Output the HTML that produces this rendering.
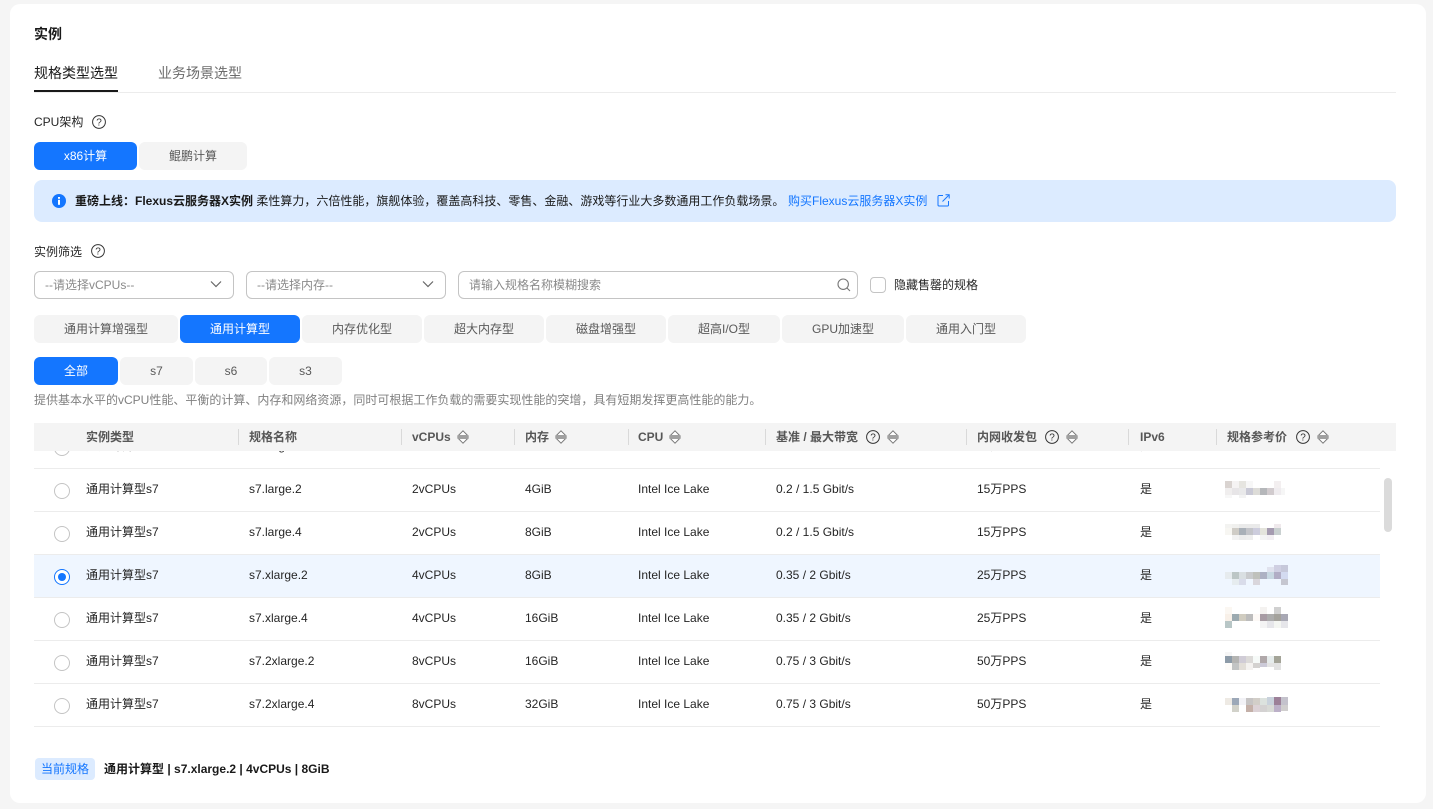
<!DOCTYPE html>
<html lang="zh-CN">
<head>
<meta charset="utf-8">
<title>实例</title>
<style>
*{box-sizing:border-box}
html,body{margin:0;padding:0}
body{width:1433px;height:809px;overflow:hidden;background:#f5f5f5;position:relative;font:12px/16px "Liberation Sans","Noto Sans CJK SC",sans-serif;color:#191919}
.card{position:absolute;left:10px;top:4px;width:1416px;height:799px;background:#fff;border-radius:10px}
.a{position:absolute;white-space:nowrap}
.btn{position:absolute;height:28px;line-height:28px;text-align:center;background:#f4f4f4;color:#595959;border-radius:6px}
.on{background:#1476ff;color:#fff}
.inp{position:absolute;top:271px;height:28px;line-height:26px;border:1px solid #c4c4c4;border-radius:6px;padding-left:10px;color:#8a8a8a;background:#fff}
.th{position:absolute;top:429px;line-height:16px;font-weight:bold;color:#575757}
.sep{position:absolute;top:429px;width:1px;height:16px;background:#d9d9d9}
.sv{position:absolute;top:430px}
.scroll{position:absolute;left:34px;top:451px;width:1346px;height:276px;overflow:hidden}
.row{position:absolute;left:0;width:1346px;height:43px;border-bottom:1px solid #ececec}
.row span{position:absolute;top:12px;line-height:16px;white-space:nowrap;color:#252525}
.row i{position:absolute;left:20px;top:14px;width:16px;height:16px;border:1px solid #c4c4c4;border-radius:50%;background:#fff}
.c1{left:52px}.c2{left:215px}.c3{left:378px}.c4{left:491px}.c5{left:604px}.c6{left:742px}.c7{left:943px}.c8{left:1106px}
</style>
</head>
<body>
<div class="card"></div>

<div class="a" style="left:34px;top:26px;font-size:14px;font-weight:bold">实例</div>
<div class="a" style="left:34px;top:64px;font-size:14px;line-height:18px;">规格类型选型</div>
<div class="a" style="left:158px;top:64px;font-size:14px;line-height:18px;color:#6b6b6b">业务场景选型</div>
<div class="a" style="left:34px;top:92px;width:1362px;height:1px;background:#ececec"></div>
<div class="a" style="left:34px;top:90px;width:84px;height:2px;background:#191919"></div>

<div class="a" style="left:34px;top:114px;color:#252525">CPU架构</div>
<svg class="a" style="left:92px;top:115px" width="14" height="14" viewBox="0 0 14 14"><circle cx="7" cy="7" r="6.4" fill="none" stroke="#333" stroke-width="1"/><text x="7" y="10.5" font-size="10" text-anchor="middle" fill="#333" font-family="Liberation Sans">?</text></svg>
<div class="btn on" style="left:34px;top:142px;width:103px">x86计算</div>
<div class="btn" style="left:139px;top:142px;width:108px">鲲鹏计算</div>

<div class="a" style="left:34px;top:180px;width:1362px;height:42px;background:#dcebff;border-radius:8px"></div>
<svg class="a" style="left:52px;top:194px" width="14" height="14" viewBox="0 0 14 14"><circle cx="7" cy="7" r="7" fill="#1476ff"/><rect x="6" y="3" width="2" height="1.8" fill="#fff"/><rect x="6" y="5.8" width="2" height="5" fill="#fff"/></svg>
<div class="a" style="left:75px;top:193px;color:#191919"><b>重磅上线：Flexus云服务器X实例</b> 柔性算力，六倍性能，旗舰体验，覆盖高科技、零售、金融、游戏等行业大多数通用工作负载场景。</div>
<div class="a" style="left:788px;top:193px;color:#1476ff">购买Flexus云服务器X实例</div>
<svg class="a" style="left:937px;top:194px" width="13" height="13" viewBox="0 0 13 13" fill="none" stroke="#1476ff" stroke-width="1"><path d="M6 1.5H2a1 1 0 0 0-1 1V11a1 1 0 0 0 1 1h8.500a1 1 0 0 0 1-1V7"/><path d="M5.500 7.500L12 1"/><path d="M8.500 .8H12.200V4.500"/></svg>

<div class="a" style="left:34px;top:244px;color:#252525">实例筛选</div>
<svg class="a" style="left:91px;top:244px" width="14" height="14" viewBox="0 0 14 14"><circle cx="7" cy="7" r="6.400" fill="none" stroke="#333" stroke-width="1"/><text x="7" y="10.500" font-size="10" text-anchor="middle" fill="#333" font-family="Liberation Sans">?</text></svg>

<div class="inp" style="left:34px;width:200px">--请选择vCPUs--</div>
<svg class="a" style="left:210px;top:280px" width="12" height="9" viewBox="0 0 12 9"><path d="M1 1.500L6 6.500L11 1.500" fill="none" stroke="#666" stroke-width="1.200"/></svg>
<div class="inp" style="left:246px;width:200px">--请选择内存--</div>
<svg class="a" style="left:422px;top:280px" width="12" height="9" viewBox="0 0 12 9"><path d="M1 1.500L6 6.500L11 1.500" fill="none" stroke="#666" stroke-width="1.200"/></svg>
<div class="inp" style="left:458px;width:400px">请输入规格名称模糊搜索</div>
<svg class="a" style="left:837px;top:278px" width="14" height="14" viewBox="0 0 14 14" fill="none" stroke="#777" stroke-width="1.100"><circle cx="6.200" cy="6.200" r="5.200"/><path d="M10 10L13 13"/></svg>
<div class="a" style="left:870px;top:277px;width:16px;height:16px;border:1px solid #c4c4c4;border-radius:4px;background:#fff"></div>
<div class="a" style="left:894px;top:277px;color:#252525">隐藏售罄的规格</div>

<div class="btn" style="left:34px;top:315px;width:144px">通用计算增强型</div>
<div class="btn on" style="left:180px;top:315px;width:120px">通用计算型</div>
<div class="btn" style="left:302px;top:315px;width:120px">内存优化型</div>
<div class="btn" style="left:424px;top:315px;width:120px">超大内存型</div>
<div class="btn" style="left:546px;top:315px;width:120px">磁盘增强型</div>
<div class="btn" style="left:668px;top:315px;width:112px">超高I/O型</div>
<div class="btn" style="left:782px;top:315px;width:122px">GPU加速型</div>
<div class="btn" style="left:906px;top:315px;width:120px">通用入门型</div>

<div class="btn on" style="left:34px;top:357px;width:84px">全部</div>
<div class="btn" style="left:120px;top:357px;width:73px">s7</div>
<div class="btn" style="left:195px;top:357px;width:72px">s6</div>
<div class="btn" style="left:269px;top:357px;width:73px">s3</div>

<div class="a" style="left:34px;top:392px;color:#808080">提供基本水平的vCPU性能、平衡的计算、内存和网络资源，同时可根据工作负载的需要实现性能的突增，具有短期发挥更高性能的能力。</div>

<div class="scroll">
  <div class="row" style="top:-25px"><i></i><span class="c1">通用计算型s7</span><span class="c2">s7.large</span><span class="c3">2vCPUs</span><span class="c4">2GiB</span><span class="c5">Intel Ice Lake</span><span class="c6">0.2 / 1.5 Gbit/s</span><span class="c7">15万PPS</span><span class="c8">是</span></div>
  <div class="row" style="top:18px"><i></i><span class="c1">通用计算型s7</span><span class="c2">s7.large.2</span><span class="c3">2vCPUs</span><span class="c4">4GiB</span><span class="c5">Intel Ice Lake</span><span class="c6">0.2 / 1.5 Gbit/s</span><span class="c7">15万PPS</span><span class="c8">是</span></div>
  <div class="row" style="top:61px"><i></i><span class="c1">通用计算型s7</span><span class="c2">s7.large.4</span><span class="c3">2vCPUs</span><span class="c4">8GiB</span><span class="c5">Intel Ice Lake</span><span class="c6">0.2 / 1.5 Gbit/s</span><span class="c7">15万PPS</span><span class="c8">是</span></div>
  <div class="row" style="top:104px;background:#eff6ff"><i style="border-color:#1476ff"><b style="position:absolute;left:3px;top:3px;width:8px;height:8px;border-radius:50%;background:#1476ff"></b></i><span class="c1">通用计算型s7</span><span class="c2">s7.xlarge.2</span><span class="c3">4vCPUs</span><span class="c4">8GiB</span><span class="c5">Intel Ice Lake</span><span class="c6">0.35 / 2 Gbit/s</span><span class="c7">25万PPS</span><span class="c8">是</span></div>
  <div class="row" style="top:147px"><i></i><span class="c1">通用计算型s7</span><span class="c2">s7.xlarge.4</span><span class="c3">4vCPUs</span><span class="c4">16GiB</span><span class="c5">Intel Ice Lake</span><span class="c6">0.35 / 2 Gbit/s</span><span class="c7">25万PPS</span><span class="c8">是</span></div>
  <div class="row" style="top:190px"><i></i><span class="c1">通用计算型s7</span><span class="c2">s7.2xlarge.2</span><span class="c3">8vCPUs</span><span class="c4">16GiB</span><span class="c5">Intel Ice Lake</span><span class="c6">0.75 / 3 Gbit/s</span><span class="c7">50万PPS</span><span class="c8">是</span></div>
  <div class="row" style="top:233px"><i></i><span class="c1">通用计算型s7</span><span class="c2">s7.2xlarge.4</span><span class="c3">8vCPUs</span><span class="c4">32GiB</span><span class="c5">Intel Ice Lake</span><span class="c6">0.75 / 3 Gbit/s</span><span class="c7">50万PPS</span><span class="c8">是</span></div>
</div>

<!-- blurred prices -->
<svg class="a" style="left:1225px;top:481px" width="63" height="250" viewBox="0 0 63 250" shape-rendering="crispEdges">
  <!-- row 1 -->
  <g transform="translate(0,0)"><rect x="0" y="0" width="7" height="7" fill="#d9d3d0"/><rect x="7" y="0" width="7" height="7" fill="#f5f3f3"/><rect x="14" y="0" width="7" height="7" fill="#e6e5e0"/><rect x="21" y="0" width="7" height="7" fill="#f7f7f7"/><rect x="49" y="0" width="7" height="7" fill="#f3eff0"/>
  <rect x="0" y="7" width="7" height="7" fill="#f0eeee"/><rect x="7" y="7" width="7" height="7" fill="#e7e5e7"/><rect x="14" y="7" width="7" height="7" fill="#e9e9ea"/><rect x="21" y="7" width="7" height="7" fill="#c9c9d5"/><rect x="28" y="7" width="7" height="7" fill="#dddcd8"/><rect x="35" y="7" width="7" height="7" fill="#b5b7ba"/><rect x="42" y="7" width="7" height="7" fill="#d1cbce"/><rect x="49" y="7" width="7" height="7" fill="#efecef"/><rect x="56" y="7" width="4" height="7" fill="#f6f6f6"/>
  <rect x="0" y="14" width="7" height="3" fill="#f7f7f7"/><rect x="14" y="14" width="7" height="3" fill="#f3f3f3"/></g>
  <!-- row 2 -->
  <g transform="translate(0,43)"><rect x="0" y="0" width="7" height="4" fill="#f3f3f1"/><rect x="7" y="0" width="7" height="4" fill="#f0f0ee"/><rect x="14" y="0" width="21" height="4" fill="#eaeaea"/><rect x="49" y="0" width="7" height="4" fill="#efe9ec"/>
  <rect x="0" y="4" width="7" height="7" fill="#f7f6f2"/><rect x="7" y="4" width="7" height="7" fill="#cfccc6"/><rect x="14" y="4" width="7" height="7" fill="#a9b0b8"/><rect x="21" y="4" width="7" height="7" fill="#c3c4c9"/><rect x="28" y="4" width="7" height="7" fill="#cdcddd"/><rect x="35" y="4" width="7" height="7" fill="#e4e4dc"/><rect x="42" y="4" width="7" height="7" fill="#a59bb0"/><rect x="49" y="4" width="7" height="7" fill="#c9d0d0"/>
  <rect x="7" y="11" width="7" height="5" fill="#f2f2f2"/><rect x="14" y="11" width="7" height="5" fill="#ececec"/><rect x="21" y="11" width="7" height="5" fill="#eeeeee"/><rect x="35" y="11" width="7" height="5" fill="#f4f4f4"/><rect x="42" y="11" width="7" height="5" fill="#f2eff2"/></g>
  <!-- row 3 -->
  <g transform="translate(0,84)"><rect x="49" y="0" width="7" height="7" fill="#cfcfe2"/><rect x="56" y="0" width="7" height="7" fill="#c6c8da"/><rect x="42" y="2" width="7" height="5" fill="#e0e2ee"/>
  <rect x="0" y="7" width="7" height="7" fill="#e6ebee"/><rect x="7" y="7" width="7" height="7" fill="#bcc6c6"/><rect x="14" y="7" width="7" height="7" fill="#d9dfe2"/><rect x="21" y="7" width="7" height="7" fill="#c9cbce"/><rect x="28" y="7" width="7" height="7" fill="#bfc1bc"/><rect x="35" y="7" width="7" height="7" fill="#adb1c3"/><rect x="42" y="7" width="7" height="7" fill="#c8d8e2"/><rect x="49" y="7" width="7" height="7" fill="#b1adc5"/><rect x="56" y="7" width="7" height="7" fill="#d3daf0"/>
  <rect x="7" y="14" width="7" height="6" fill="#e6ecef"/><rect x="14" y="14" width="7" height="6" fill="#d9dcea"/><rect x="28" y="14" width="7" height="6" fill="#d9d6dc"/><rect x="56" y="14" width="7" height="6" fill="#c5c6d0"/></g>
  <!-- row 4 -->
  <g transform="translate(0,126)"><rect x="0" y="0" width="7" height="7" fill="#fbf7f2"/><rect x="35" y="0" width="7" height="7" fill="#f4f2f0"/><rect x="49" y="0" width="7" height="7" fill="#d0d0d0"/>
  <rect x="0" y="7" width="7" height="7" fill="#f8f0e8"/><rect x="7" y="7" width="7" height="7" fill="#9caab0"/><rect x="14" y="7" width="7" height="7" fill="#d0ccc0"/><rect x="21" y="7" width="7" height="7" fill="#bcbcbc"/><rect x="28" y="7" width="7" height="7" fill="#fdf9f6"/><rect x="35" y="7" width="7" height="7" fill="#a89ca4"/><rect x="42" y="7" width="7" height="7" fill="#acacac"/><rect x="49" y="7" width="7" height="7" fill="#a4a29c"/><rect x="56" y="7" width="7" height="7" fill="#a8a8b4"/>
  <rect x="0" y="14" width="7" height="7" fill="#b8c6c6"/><rect x="35" y="14" width="7" height="7" fill="#f4f4f4"/><rect x="42" y="14" width="7" height="7" fill="#e6e6ea"/><rect x="49" y="14" width="7" height="7" fill="#f4f6f2"/><rect x="56" y="14" width="7" height="7" fill="#e6e6ea"/></g>
  <!-- row 5 -->
  <g transform="translate(0,173)"><rect x="0" y="-2" width="7" height="4" fill="#f6f6f6"/>
  <rect x="0" y="2" width="7" height="7" fill="#8d9ba8"/><rect x="7" y="2" width="7" height="7" fill="#b4b4b2"/><rect x="14" y="2" width="7" height="7" fill="#d0ccd6"/><rect x="21" y="2" width="7" height="7" fill="#dcdad8"/><rect x="28" y="2" width="7" height="7" fill="#f6faf8"/><rect x="35" y="2" width="7" height="7" fill="#b0a8aa"/><rect x="42" y="2" width="7" height="7" fill="#e6ecec"/><rect x="49" y="2" width="7" height="7" fill="#a4a498"/>
  <rect x="0" y="9" width="7" height="7" fill="#fdfbf8"/><rect x="7" y="9" width="7" height="7" fill="#c2c4c4"/><rect x="14" y="9" width="7" height="7" fill="#e2ded8"/><rect x="21" y="9" width="7" height="7" fill="#f4f2f0"/><rect x="28" y="9" width="7" height="5" fill="#d4d2d0"/><rect x="35" y="9" width="7" height="4" fill="#cccad8"/><rect x="42" y="9" width="7" height="4" fill="#e4e4e4"/><rect x="49" y="9" width="7" height="7" fill="#e2e2e2"/></g>
  <!-- row 6 -->
  <g transform="translate(0,211)"><rect x="42" y="5" width="7" height="1" fill="#c9d2dc"/><rect x="49" y="5" width="7" height="1" fill="#9c8098"/><rect x="56" y="5" width="7" height="1" fill="#c4c2cc"/>
  <rect x="0" y="6" width="7" height="7" fill="#eeeae4"/><rect x="7" y="6" width="7" height="7" fill="#9ca8b8"/><rect x="14" y="6" width="7" height="7" fill="#f2f2f6"/><rect x="21" y="6" width="7" height="7" fill="#c6c4c4"/><rect x="28" y="6" width="7" height="7" fill="#d2cec8"/><rect x="35" y="6" width="7" height="7" fill="#dce2de"/><rect x="42" y="6" width="7" height="7" fill="#c9d2dc"/><rect x="49" y="6" width="7" height="7" fill="#9c8098"/><rect x="56" y="6" width="7" height="7" fill="#c4c2cc"/>
  <rect x="7" y="13" width="7" height="7" fill="#d2d2ca"/><rect x="21" y="13" width="7" height="7" fill="#c4b0a8"/><rect x="28" y="13" width="7" height="7" fill="#dcd2d6"/><rect x="35" y="13" width="7" height="7" fill="#d4d2d2"/><rect x="42" y="13" width="7" height="7" fill="#d8dad6"/><rect x="49" y="13" width="7" height="7" fill="#bcb0c8"/><rect x="56" y="13" width="7" height="6" fill="#d0cece"/></g>
</svg>

<!-- table header -->
<div class="a" style="left:34px;top:423px;width:1362px;height:28px;background:#f4f4f4"></div>
<div class="th" style="left:86px">实例类型</div>
<div class="sep" style="left:238px"></div>
<div class="th" style="left:249px">规格名称</div>
<div class="sep" style="left:401px"></div>
<div class="th" style="left:412px">vCPUs</div>
<svg class="sv" style="left:457px" width="12" height="14" viewBox="0 0 12 14"><path d="M6 .8L11.200 6H.8z M6 13.200L.8 8H11.200z" fill="#fff" stroke="#777"/><rect x="1" y="5" width="10" height="4" fill="#a0a0a0"/></svg>
<div class="sep" style="left:514px"></div>
<div class="th" style="left:525px">内存</div>
<svg class="sv" style="left:555px" width="12" height="14" viewBox="0 0 12 14"><path d="M6 .8L11.200 6H.8z M6 13.200L.8 8H11.200z" fill="#fff" stroke="#777"/><rect x="1" y="5" width="10" height="4" fill="#a0a0a0"/></svg>
<div class="sep" style="left:628px"></div>
<div class="th" style="left:638px">CPU</div>
<svg class="sv" style="left:669px" width="12" height="14" viewBox="0 0 12 14"><path d="M6 .8L11.200 6H.8z M6 13.200L.8 8H11.200z" fill="#fff" stroke="#777"/><rect x="1" y="5" width="10" height="4" fill="#a0a0a0"/></svg>
<div class="sep" style="left:765px"></div>
<div class="th" style="left:776px">基准 / 最大带宽</div>
<svg class="a" style="left:866px;top:430px" width="14" height="14" viewBox="0 0 14 14"><circle cx="7" cy="7" r="6.400" fill="none" stroke="#333"/><text x="7" y="10.500" font-size="10" text-anchor="middle" fill="#333" font-family="Liberation Sans">?</text></svg>
<svg class="sv" style="left:887px" width="12" height="14" viewBox="0 0 12 14"><path d="M6 .8L11.200 6H.8z M6 13.200L.8 8H11.200z" fill="#fff" stroke="#777"/><rect x="1" y="5" width="10" height="4" fill="#a0a0a0"/></svg>
<div class="sep" style="left:966px"></div>
<div class="th" style="left:977px">内网收发包</div>
<svg class="a" style="left:1045px;top:430px" width="14" height="14" viewBox="0 0 14 14"><circle cx="7" cy="7" r="6.400" fill="none" stroke="#333"/><text x="7" y="10.500" font-size="10" text-anchor="middle" fill="#333" font-family="Liberation Sans">?</text></svg>
<svg class="sv" style="left:1066px" width="12" height="14" viewBox="0 0 12 14"><path d="M6 .8L11.200 6H.8z M6 13.200L.8 8H11.200z" fill="#fff" stroke="#777"/><rect x="1" y="5" width="10" height="4" fill="#a0a0a0"/></svg>
<div class="sep" style="left:1128px"></div>
<div class="th" style="left:1140px">IPv6</div>
<div class="sep" style="left:1216px"></div>
<div class="th" style="left:1227px">规格参考价</div>
<svg class="a" style="left:1296px;top:430px" width="14" height="14" viewBox="0 0 14 14"><circle cx="7" cy="7" r="6.400" fill="none" stroke="#333"/><text x="7" y="10.500" font-size="10" text-anchor="middle" fill="#333" font-family="Liberation Sans">?</text></svg>
<svg class="sv" style="left:1317px" width="12" height="14" viewBox="0 0 12 14"><path d="M6 .8L11.200 6H.8z M6 13.200L.8 8H11.200z" fill="#fff" stroke="#777"/><rect x="1" y="5" width="10" height="4" fill="#a0a0a0"/></svg>

<!-- scrollbar -->
<div class="a" style="left:1384px;top:478px;width:8px;height:54px;background:#dbdbdb;border-radius:4px"></div>

<!-- footer -->
<div class="a" style="left:35px;top:758px;width:60px;height:22px;line-height:22px;text-align:center;background:#dcebff;color:#1476ff;border-radius:4px">当前规格</div>
<div class="a" style="left:104px;top:761px;font-weight:bold;color:#191919">通用计算型 | s7.xlarge.2 | 4vCPUs | 8GiB</div>
</body>
</html>
